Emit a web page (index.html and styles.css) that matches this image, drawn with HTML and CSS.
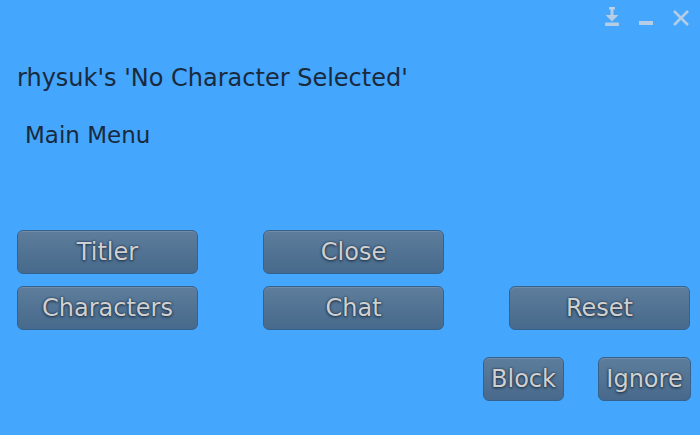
FILE: index.html
```html
<!DOCTYPE html>
<html>
<head>
<meta charset="utf-8">
<link rel="stylesheet" href="styles.css">
</head>
<body>
<div class="dialog">
  <div class="header">
    <svg class="icon" width="16" height="22" viewBox="0 0 16 22">
      <rect x="5" y="1" width="6" height="2.5" fill="currentColor"/>
      <rect x="6.5" y="1" width="3" height="9" fill="currentColor"/>
      <polygon points="1.5,9 14.5,9 8,15.5" fill="currentColor"/>
      <rect x="1" y="16.5" width="14" height="3.5" rx="1" fill="currentColor"/>
    </svg>
    <svg class="icon" width="16" height="22" viewBox="0 0 16 22">
      <rect x="1" y="15" width="14" height="4" fill="currentColor"/>
    </svg>
    <svg class="icon" width="18" height="22" viewBox="0 0 18 22">
      <path d="M2 5 L16 19 M16 5 L2 19" stroke="currentColor" stroke-width="2.6" fill="none"/>
    </svg>
  </div>
  <div class="title">rhysuk's 'No Character Selected'</div>
  <div class="subtitle">Main Menu</div>
  <div class="grid">
    <button class="btn">Titler</button>
    <button class="btn">Close</button>
    <div></div>
    <button class="btn">Characters</button>
    <button class="btn">Chat</button>
    <button class="btn">Reset</button>
  </div>
  <div class="footer">
    <button class="btn btn-block">Block</button>
    <button class="btn btn-ignore">Ignore</button>
  </div>
</div>
</body>
</html>
```
FILE: styles.css
```css
html, body {
  margin: 0;
  padding: 0;
  background: #44a6fc;
}
.dialog {
  width: 700px;
  height: 435px;
  background: #44a6fc;
  font-family: "DejaVu Sans", sans-serif;
  color: #1a2a3e;
  box-sizing: border-box;
}
.header {
  height: 40px;
  display: flex;
  justify-content: flex-end;
  align-items: flex-start;
  gap: 18px;
  padding: 6px 10px 0 0;
  box-sizing: border-box;
  color: rgba(200, 212, 224, 0.85);
}
.icon {
  display: block;
}
.title {
  margin-top: 24px;
  padding-left: 17px;
  font-size: 24px;
  line-height: 28px;
}
.subtitle {
  margin-top: 30px;
  padding-left: 25px;
  font-size: 23px;
  line-height: 27px;
}
.grid {
  margin-top: 81px;
  padding-left: 17px;
  display: grid;
  grid-template-columns: 181px 181px 181px;
  grid-auto-rows: 44px;
  column-gap: 65px;
  row-gap: 12px;
}
.btn {
  font-family: "DejaVu Sans", sans-serif;
  font-size: 24px;
  color: #d0d0d0;
  text-shadow: 0 0 2px #1c2f44, 0 1px 3px #1c2f44;
  border: 1px solid #35618a;
  border-radius: 6px;
  background: linear-gradient(#5e7d9c, #47698b);
  box-shadow: inset 0 1px 0 rgba(255, 255, 255, 0.12);
  padding: 0;
  margin: 0;
  height: 44px;
}
.footer {
  margin-top: 27px;
  display: flex;
  justify-content: flex-end;
  padding-right: 9px;
  gap: 34px;
}
.btn-block {
  width: 81px;
}
.btn-ignore {
  width: 93px;
}
```
